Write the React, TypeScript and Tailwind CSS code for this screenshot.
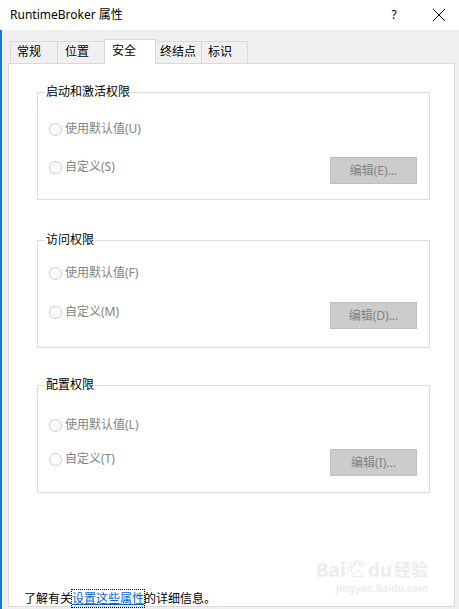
import React from "react";

function Radio({ label }: { label: string }) {
  return (
    <div className="flex items-center h-[16px]">
      <span className="w-[13px] h-[13px] rounded-full border border-[#cccccc] bg-white shrink-0" />
      <span className="ml-[3px] text-[#838383] leading-[16px]">{label}</span>
    </div>
  );
}

function Group({ title, a, b, btn, mt, pt, gap }: { title: string; a: string; b: string; btn: string; mt: string; pt: string; gap: string }) {
  return (
    <div className={`relative w-[393px] h-[108px] border border-[#dcdcdc] ${mt}`}>
      <span className="absolute left-[7px] top-[-9px] bg-white px-[1px] leading-[16px] text-black">{title}</span>
      <div className={`flex flex-col pl-[11px] pr-[12px] ${pt}`}>
        <Radio label={a} />
        <div className={`flex items-start justify-between ${gap}`}>
          <div className="mt-[2px]">
            <Radio label={b} />
          </div>
          <div className="w-[87px] h-[27px] bg-[#cccccc] border border-[#bfbfbf] flex items-center justify-center text-[#838383]">
            {btn}
          </div>
        </div>
      </div>
    </div>
  );
}

export default function App() {
  return (
    <div className="w-[459px] h-[609px] flex flex-col bg-[#f0f0f0] font-['Noto_Sans','Noto_Sans_CJK_SC',sans-serif] text-[12px] text-black overflow-hidden">
      <div className="h-[30px] bg-white flex items-center pl-[10px] shrink-0">
        <span className="flex-1 leading-[16px]">RuntimeBroker 属性</span>
        <span className="w-[8px] text-center leading-[16px] mr-[34px]">?</span>
        <svg width="14" height="14" viewBox="0 0 14 14" className="mr-[13px]">
          <path d="M1 1 L13 13 M13 1 L1 13" stroke="#000" strokeWidth="1" fill="none" />
        </svg>
      </div>
      <div className="flex-1 flex flex-col border-l-2 border-[#1979ca] pl-[6px] pr-[4px] pt-[9px] pb-[2px]">
        <div className="flex items-end h-[24px] pl-[2px]">
          <div className="w-[48px] h-[22px] border border-b-0 border-[#d9d9d9] bg-[#f0f0f0] pl-[6px] leading-[20px]">常规</div>
          <div className="-ml-px w-[48px] h-[22px] border border-b-0 border-[#d9d9d9] bg-[#f0f0f0] pl-[7px] leading-[20px]">位置</div>
          <div className="-ml-px relative z-10 w-[52px] h-[25px] -mb-px border border-b-0 border-[#d9d9d9] bg-white pl-[7px] leading-[22px]">安全</div>
          <div className="-ml-px w-[47px] h-[22px] border border-b-0 border-[#d9d9d9] bg-[#f0f0f0] pl-[4px] leading-[20px]">终结点</div>
          <div className="-ml-px w-[47px] h-[22px] border border-b-0 border-[#d9d9d9] bg-[#f0f0f0] pl-[6px] leading-[20px]">标识</div>
        </div>
        <div className="relative flex-1 flex flex-col border border-[#d9d9d9] bg-white pl-[28px]">
          <Group title="启动和激活权限" a="使用默认值(U)" b="自定义(S)" btn="编辑(E)..." mt="mt-[28px]" pt="pt-[28px]" gap="mt-[20px]" />
          <Group title="访问权限" a="使用默认值(F)" b="自定义(M)" btn="编辑(D)..." mt="mt-[40px]" pt="pt-[24px]" gap="mt-[21px]" />
          <Group title="配置权限" a="使用默认值(L)" b="自定义(T)" btn="编辑(I)..." mt="mt-[37px]" pt="pt-[31px]" gap="mt-[16px]" />
          <div className="mt-auto -ml-[13px] leading-[16px] -mb-px">
            了解有关
            <span className="text-[#0066cc] underline outline-1 outline-dotted outline-black">设置这些属性</span>
            的详细信息。
          </div>
          <div className="absolute right-[26px] bottom-[12px] flex flex-col items-end text-[#ededed] pointer-events-none">
            <div className="flex items-end h-[22px]">
              <span className="text-[19px] font-bold leading-[20px]">Bai</span>
              <svg width="22" height="20" viewBox="0 0 22 22">
                <circle cx="6" cy="5" r="2.5" fill="none" stroke="#e6e6e6" />
                <circle cx="11" cy="3" r="2.5" fill="none" stroke="#e6e6e6" />
                <circle cx="16" cy="5" r="2.5" fill="none" stroke="#e6e6e6" />
                <circle cx="3" cy="10" r="2.5" fill="none" stroke="#e6e6e6" />
                <path d="M5 18 Q11 6 18 18 Z" fill="none" stroke="#e6e6e6" />
              </svg>
              <span className="text-[19px] font-bold leading-[20px]">du</span>
              <span className="text-[17px] font-bold leading-[20px] ml-[2px]">经验</span>
            </div>
            <span className="text-[10px] leading-[12px] font-bold mt-[2px]">jingyan.baidu.com</span>
          </div>
        </div>
      </div>
    </div>
  );
}
